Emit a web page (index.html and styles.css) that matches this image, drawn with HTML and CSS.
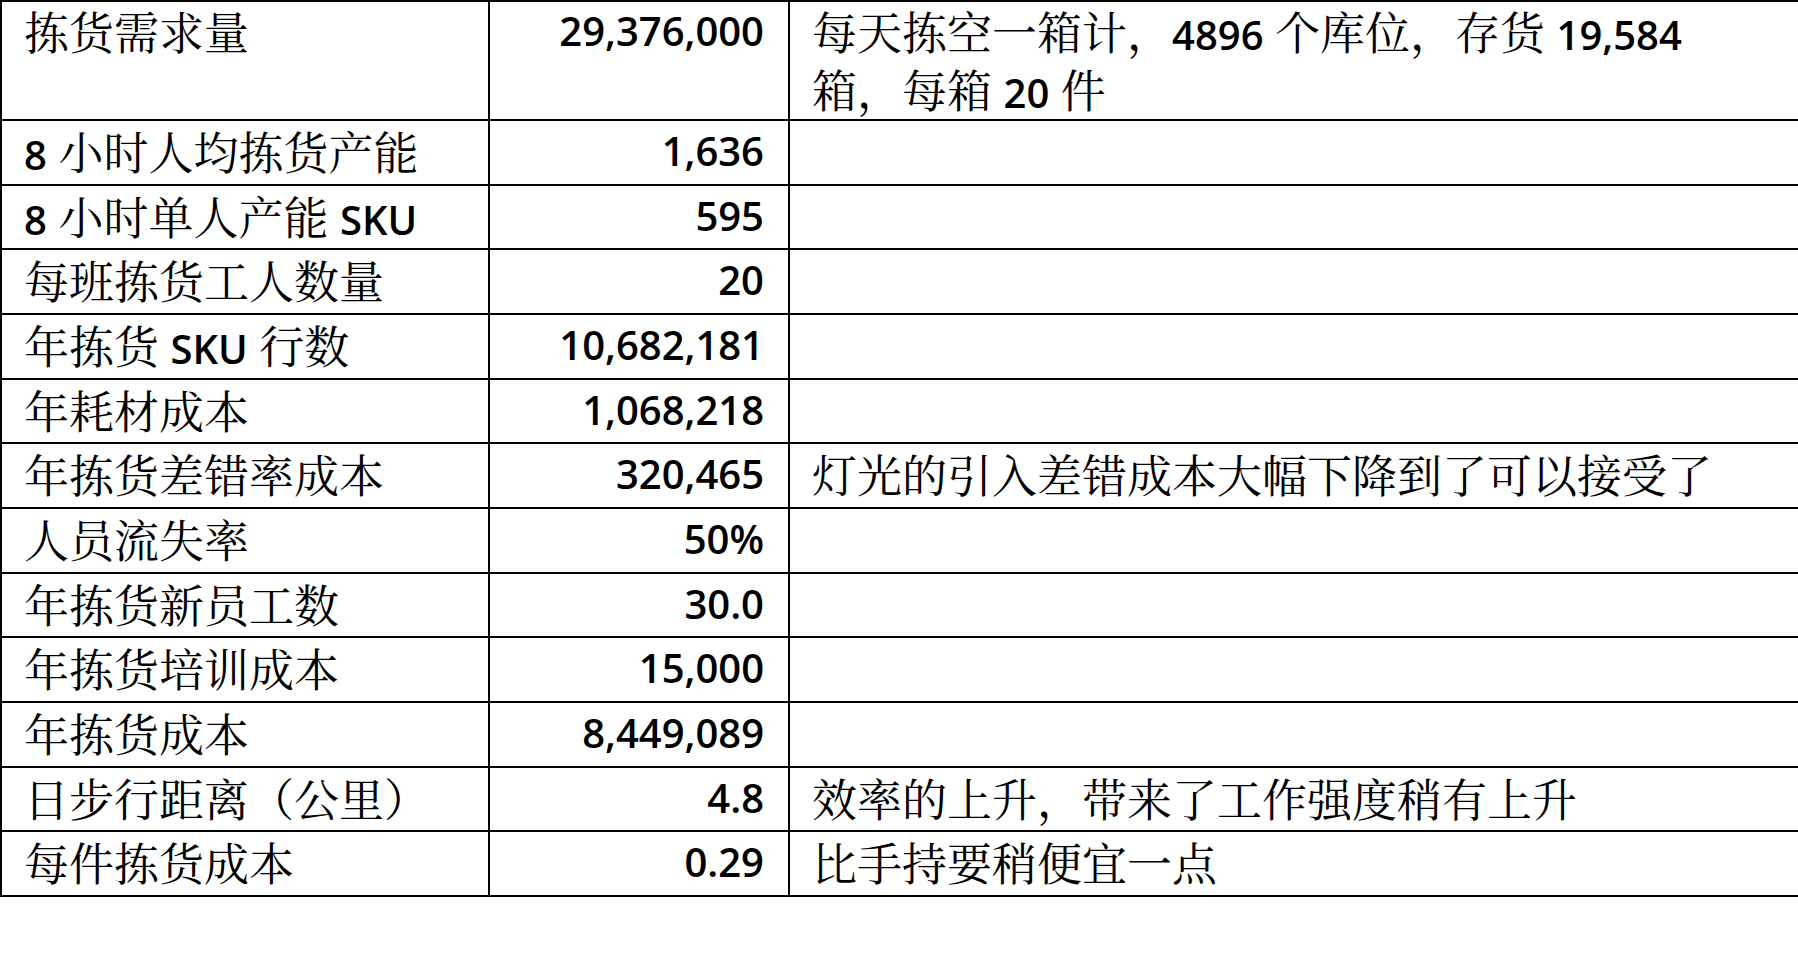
FILE: index.html
```html
<!DOCTYPE html>
<html lang="zh-CN">
<head>
<meta charset="utf-8">
<title>拣货成本</title>
<link rel="stylesheet" href="styles.css">
</head>
<body>
<table class="sheet">
  <colgroup>
    <col class="c-label">
    <col class="c-value">
    <col class="c-note">
  </colgroup>
  <tbody>
    <tr class="tall">
      <td class="label">拣货需求量</td>
      <td class="value">29,376,000</td>
      <td class="note">每天拣空一箱计，<span class="lat">4896</span> 个库位，存货 <span class="lat">19,584</span><br>箱，每箱 <span class="lat">20</span> 件</td>
    </tr>
    <tr>
      <td class="label"><span class="lat">8</span> 小时人均拣货产能</td>
      <td class="value">1,636</td>
      <td class="note"></td>
    </tr>
    <tr>
      <td class="label"><span class="lat">8</span> 小时单人产能 <span class="lat">SKU</span></td>
      <td class="value">595</td>
      <td class="note"></td>
    </tr>
    <tr>
      <td class="label">每班拣货工人数量</td>
      <td class="value">20</td>
      <td class="note"></td>
    </tr>
    <tr>
      <td class="label">年拣货 <span class="lat">SKU</span> 行数</td>
      <td class="value">10,682,181</td>
      <td class="note"></td>
    </tr>
    <tr>
      <td class="label">年耗材成本</td>
      <td class="value">1,068,218</td>
      <td class="note"></td>
    </tr>
    <tr>
      <td class="label">年拣货差错率成本</td>
      <td class="value">320,465</td>
      <td class="note">灯光的引入差错成本大幅下降到了可以接受了</td>
    </tr>
    <tr>
      <td class="label">人员流失率</td>
      <td class="value">50%</td>
      <td class="note"></td>
    </tr>
    <tr>
      <td class="label">年拣货新员工数</td>
      <td class="value">30.0</td>
      <td class="note"></td>
    </tr>
    <tr>
      <td class="label">年拣货培训成本</td>
      <td class="value">15,000</td>
      <td class="note"></td>
    </tr>
    <tr>
      <td class="label">年拣货成本</td>
      <td class="value">8,449,089</td>
      <td class="note"></td>
    </tr>
    <tr>
      <td class="label">日步行距离（公里）</td>
      <td class="value">4.8</td>
      <td class="note">效率的上升，带来了工作强度稍有上升</td>
    </tr>
    <tr>
      <td class="label">每件拣货成本</td>
      <td class="value">0.29</td>
      <td class="note">比手持要稍便宜一点</td>
    </tr>
  </tbody>
</table>
</body>
</html>
```

FILE: styles.css
```css
html, body {
  margin: 0;
  padding: 0;
  background: #ffffff;
}

body {
  overflow: hidden;
  color: #000000;
  font-family: "Noto Serif CJK SC", "AR PL UMing CN", "Noto Sans CJK SC", serif;
  font-size: 45px;
}

.sheet {
  border-collapse: collapse;
  table-layout: fixed;
  width: 1798px;
}

.c-label { width: 488px; }
.c-value { width: 300px; }

.sheet td {
  border: 2px solid #000000;
  padding: 4px 22px 4px 22px;
  line-height: 52px;
  vertical-align: top;
  white-space: nowrap;
}

.sheet td:last-child {
  border-right: none;
}

.sheet tr {
  height: 64.67px;
}

.sheet tr.tall {
  height: 119px;
}

.sheet tr.tall td {
  padding-top: 0;
  padding-bottom: 0;
  line-height: 58px;
}

.value {
  text-align: right;
  font-family: "Open Sans", "Noto Sans", sans-serif;
  font-size: 40px;
  font-weight: 600;
}

.sheet td.value {
  padding-right: 24px;
}

.lat {
  font-family: "Open Sans", "Noto Sans", sans-serif;
  font-size: 40px;
  font-weight: 600;
  line-height: 1;
}
```
